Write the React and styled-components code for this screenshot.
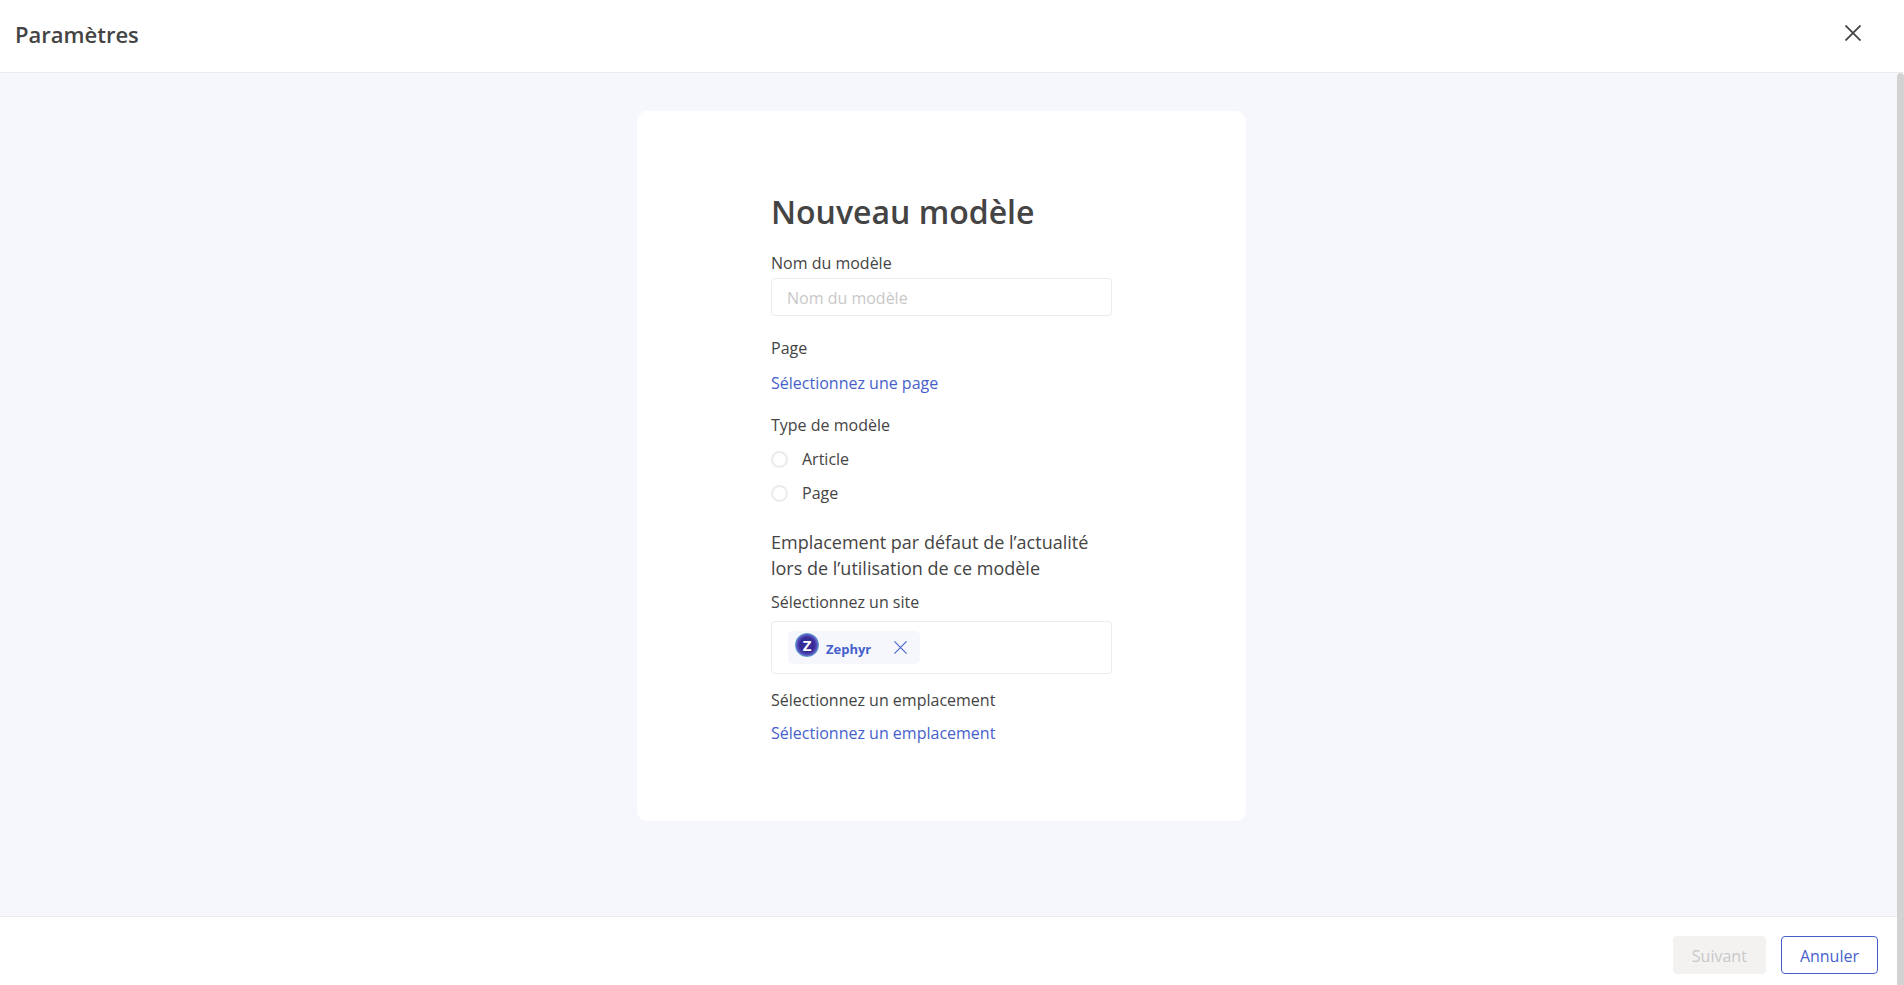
import React, { useState } from 'react';
import styled, { createGlobalStyle } from 'styled-components';

const GlobalStyle = createGlobalStyle`
  :root {
    --text: #444444;
    --primary: #465fcb;
    --page-bg: #f5f7fd;
    --border: #ebebeb;
    --muted: #c8c8c8;
  }
  * {
    box-sizing: border-box;
    margin: 0;
    padding: 0;
  }
  body {
    color: var(--text);
    font-family: 'Segoe UI', 'Open Sans', sans-serif;
    font-size: 16px;
    line-height: 24px;
  }
  button,
  input {
    font-family: inherit;
    font-size: inherit;
    line-height: inherit;
  }
`;

const PanelStyle = styled.div`
  display: flex;
  flex-direction: column;
  min-height: 100vh;
  background-color: #ffffff;
`;

const HeaderStyle = styled.header`
  display: flex;
  align-items: center;
  justify-content: space-between;
  height: 73px;
  padding: 0 39px 6px 15px;
  border-bottom: 1px solid var(--border);
  h1 {
    padding-top: 2px;
    font-size: 22px;
    font-weight: 600;
    line-height: 32px;
  }
`;

const IconButton = styled.button`
  display: flex;
  padding: 4px;
  border: none;
  background: none;
  color: ${(props) => props.$color || 'var(--text)'};
  cursor: pointer;
`;

const BodyStyle = styled.div`
  display: flex;
  flex: 1;
`;

const ContentStyle = styled.div`
  display: flex;
  flex: 1;
  flex-direction: column;
`;

const ScrollThumb = styled.div`
  width: 7px;
  border-radius: 4px 4px 0 0;
  background-color: #d2d2d2;
`;

const MainStyle = styled.main`
  flex: 1;
  padding: 38px 24px 95px 10px;
  background-color: var(--page-bg);
`;

const Card = styled.form`
  width: 100%;
  max-width: 609px;
  min-height: 710px;
  margin: 0 auto;
  padding: 80px 134px 72px;
  border-radius: 10px;
  background-color: #ffffff;
  h2 {
    margin-bottom: 18px;
    font-size: 32px;
    font-weight: 600;
    line-height: 42px;
  }
`;

const Field = styled.div`
  display: flex;
  flex-direction: column;
  align-items: flex-start;
  gap: ${(props) => props.$gap || 0}px;
  margin-bottom: ${(props) => props.$space || 0}px;
`;

const TextInput = styled.input`
  width: 100%;
  height: 38px;
  padding: 2px 15px 0;
  border: 1px solid var(--border);
  border-radius: 4px;
  color: var(--text);
  &::placeholder {
    color: var(--muted);
    opacity: 1;
  }
`;

const LinkText = styled.a`
  color: var(--primary);
  text-decoration: none;
`;

const RadioGroup = styled.fieldset`
  display: flex;
  flex-direction: column;
  gap: 10px;
  margin-bottom: 24px;
  border: none;
  legend {
    margin-bottom: 10px;
  }
`;

const RadioLabel = styled.label`
  display: flex;
  align-items: center;
  gap: 14px;
  input {
    width: 17px;
    height: 17px;
    appearance: none;
    border: 2px solid var(--border);
    border-radius: 50%;
    background-color: #ffffff;
  }
  input:checked {
    border: 5px solid var(--primary);
  }
`;

const Intro = styled.p`
  margin-bottom: 9px;
  font-size: 18px;
  line-height: 26px;
`;

const TagBox = styled.div`
  display: flex;
  align-items: center;
  width: 100%;
  height: 53px;
  padding: 0 16px;
  border: 1px solid var(--border);
  border-radius: 4px;
`;

const Tag = styled.div`
  display: flex;
  align-items: center;
  gap: 7px;
  height: 33px;
  padding: 0 9px 0 7px;
  border-radius: 5px;
  background-color: var(--page-bg);
  color: var(--primary);
  font-size: 13px;
  font-weight: 700;
  svg {
    display: block;
  }
  .avatar {
    align-self: flex-start;
    margin-top: 2px;
  }
  .name {
    margin-right: 12px;
    padding-top: 3px;
  }
`;

const FooterStyle = styled.footer`
  display: flex;
  justify-content: flex-end;
  gap: 15px;
  padding: 19px 19px 11px;
  border-top: 1px solid var(--border);
`;

const ActionButton = styled.button`
  height: 38px;
  padding: 2px 18px 0;
  border: 1px solid var(--primary);
  border-radius: 4px;
  background-color: #ffffff;
  color: var(--primary);
  cursor: pointer;
  &:disabled {
    border-color: #f3f2f1;
    background-color: #f3f2f1;
    color: var(--muted);
    cursor: default;
  }
`;

function CrossIcon({ size, stroke }) {
  return (
    <svg width={size} height={size} viewBox="0 0 16 16" fill="none">
      <path
        d="M0.5 0.5L15.5 15.5M15.5 0.5L0.5 15.5"
        stroke="currentColor"
        strokeWidth={stroke}
      />
    </svg>
  );
}

function ZephyrLogo() {
  return (
    <svg className="avatar" width="24" height="24" viewBox="0 0 24 24">
      <defs>
        <radialGradient id="zephyr-halo">
          <stop offset="0.6" stopColor="#352b96" />
          <stop offset="0.78" stopColor="#5145b5" />
          <stop offset="0.9" stopColor="#5b74c8" />
          <stop offset="1" stopColor="#70b4d4" />
        </radialGradient>
      </defs>
      <circle cx="12" cy="12" r="12" fill="url(#zephyr-halo)" />
      <text
        x="12"
        y="18"
        fill="#ffffff"
        fontSize="15"
        fontWeight="700"
        textAnchor="middle"
      >
        Z
      </text>
    </svg>
  );
}

const types = ['Article', 'Page'];

export default function App() {
  const [name, setName] = useState('');
  const [type, setType] = useState('');

  return (
    <PanelStyle>
      <GlobalStyle />
      <HeaderStyle>
        <h1>Paramètres</h1>
        <IconButton type="button" aria-label="Fermer">
          <CrossIcon size={16} stroke={1.8} />
        </IconButton>
      </HeaderStyle>
      <BodyStyle>
        <ContentStyle>
          <MainStyle>
            <Card>
              <h2>Nouveau modèle</h2>
              <Field $gap={3} $space={20}>
                <label htmlFor="name">Nom du modèle</label>
                <TextInput
                  id="name"
                  type="text"
                  placeholder="Nom du modèle"
                  value={name}
                  onChange={(e) => setName(e.target.value)}
                />
              </Field>
              <Field $gap={11} $space={18}>
                <span>Page</span>
                <LinkText href="#page">Sélectionnez une page</LinkText>
              </Field>
              <RadioGroup>
                <legend>Type de modèle</legend>
                {types.map((item) => (
                  <RadioLabel key={item}>
                    <input
                      type="radio"
                      name="type"
                      checked={type === item}
                      onChange={() => setType(item)}
                    />
                    {item}
                  </RadioLabel>
                ))}
              </RadioGroup>
              <Intro>
                Emplacement par défaut de l’actualité lors de l’utilisation de
                ce modèle
              </Intro>
              <Field $gap={7} $space={14}>
                <span>Sélectionnez un site</span>
                <TagBox>
                  <Tag>
                    <ZephyrLogo />
                    <span className="name">Zephyr</span>
                    <IconButton
                      type="button"
                      aria-label="Retirer Zephyr"
                      $color="var(--primary)"
                    >
                      <CrossIcon size={13} stroke={1.3} />
                    </IconButton>
                  </Tag>
                </TagBox>
              </Field>
              <Field $gap={9}>
                <span>Sélectionnez un emplacement</span>
                <LinkText href="#emplacement">
                  Sélectionnez un emplacement
                </LinkText>
              </Field>
            </Card>
          </MainStyle>
          <FooterStyle>
            <ActionButton type="button" disabled>
              Suivant
            </ActionButton>
            <ActionButton type="button">Annuler</ActionButton>
          </FooterStyle>
        </ContentStyle>
        <ScrollThumb />
      </BodyStyle>
    </PanelStyle>
  );
}
